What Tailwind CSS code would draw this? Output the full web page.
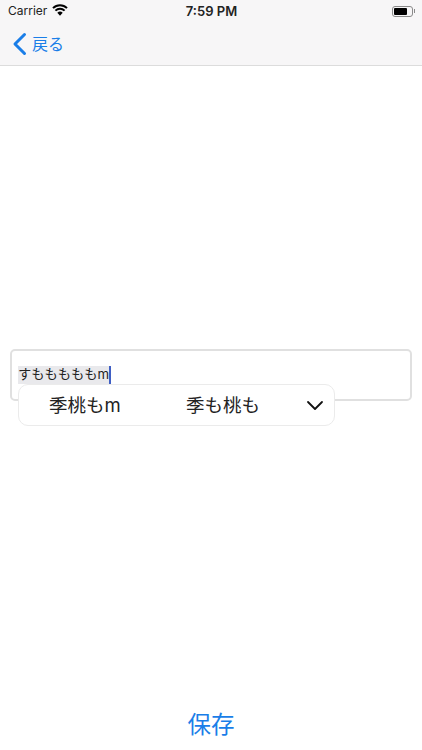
<!DOCTYPE html>
<html lang="ja">
<head>
    <meta charset="UTF-8">
    <meta name="viewport" content="width=device-width, initial-scale=1.0">
    <title>メモ</title>
    <script src="https://cdn.jsdelivr.net/npm/@tailwindcss/browser@4"></script>
</head>
<body class="bg-white font-['Inter','Noto_Sans_CJK_JP',sans-serif]">
    <div class="w-[422px] h-[750px] flex flex-col overflow-hidden">
        <!-- status bar + nav -->
        <header class="h-[66px] shrink-0 bg-[#f7f6f7] border-b border-[#dcdcdc]">
            <div class="h-[22px] pl-2 pr-[7px] grid grid-cols-3 items-center text-black">
                <div class="flex items-center gap-[5px] text-[12px] leading-none text-[#222]">
                    <span>Carrier</span>
                    <svg width="16" height="12" viewBox="0 0 16 12" class="-mt-[3px]">
                        <path d="M8 11.8 L5.3 8.8 A3.9 3.9 0 0 1 10.7 8.8 Z" fill="#000"/>
                        <path d="M3.4 6.6 A6.6 6.6 0 0 1 12.6 6.6" fill="none" stroke="#000" stroke-width="2"/>
                        <path d="M1 4.1 A10 10 0 0 1 15 4.1" fill="none" stroke="#000" stroke-width="2"/>
                    </svg>
                </div>
                <div class="text-center text-[13px] font-semibold leading-none text-[#222]">7:59 PM</div>
                <div class="flex justify-end items-center">
                    <div class="w-[21px] h-[11px] rounded-[3px] border border-[#8a8a8a] p-[1px]">
                        <div class="w-[13px] h-full rounded-[1px] bg-black"></div>
                    </div>
                    <div class="w-[1px] h-[4px] ml-[1px] bg-[#8a8a8a]"></div>
                </div>
            </div>
            <div class="h-[43px] pl-[12px] flex items-center gap-[5px] text-[#1a7ee8]">
                <svg width="15" height="24" viewBox="0 0 15 24">
                    <path d="M12.5 2.5 L3 12 L12.5 21.5" fill="none" stroke="currentColor" stroke-width="3" stroke-linecap="round" stroke-linejoin="round"/>
                </svg>
                <span class="text-[16px] leading-none">戻る</span>
            </div>
        </header>

        <main class="flex-1 flex flex-col">
            <div class="relative mt-[283px] mx-[10px] h-[52px] rounded-[5px] border-2 border-[#e0e0e0] pl-[6px] pt-[15px]">
                <div class="flex items-center h-[18px] text-[13.25px] leading-none text-[#222]">
                    <span class="bg-[#e9e9ec] h-full flex items-center">すもももももm</span>
                    <span class="w-[2px] h-[18px] bg-[#3f5fc4]"></span>
                </div>
                <!-- candidates popup -->
                <div class="absolute left-[6px] top-[33px] w-[317px] h-[42px] bg-white rounded-[10px] border border-[#ebebeb] flex items-center text-[18.5px] leading-none text-[#222] pt-[1px]">
                    <span class="w-[136px] pl-[30px]">季桃もm</span>
                    <span class="w-[136px] pl-[31px]">季も桃も</span>
                    <svg width="18" height="11" viewBox="0 0 18 11" class="ml-[15px]">
                        <path d="M2 2 L9 9 L16 2" fill="none" stroke="#111" stroke-width="1.8" stroke-linecap="round" stroke-linejoin="round"/>
                    </svg>
                </div>
            </div>
            <div class="mt-auto h-[52px] flex items-center justify-center text-[23.5px] leading-none text-[#1a7ee8] pt-[1px]">保存</div>
        </main>
    </div>
</body>
</html>
